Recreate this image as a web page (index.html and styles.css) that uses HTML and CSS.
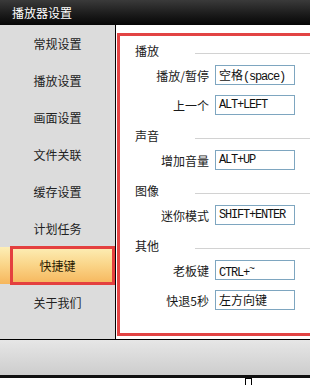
FILE: index.html
```html
<!DOCTYPE html>
<html>
<head>
<meta charset="utf-8">
<link rel="stylesheet" href="styles.css">
</head>
<body>
<div class="window">
  <div class="titlebar">播放器设置</div>
  <div class="main">
    <ul class="sidebar">
      <li class="nav-item">常规设置</li>
      <li class="nav-item">播放设置</li>
      <li class="nav-item">画面设置</li>
      <li class="nav-item">文件关联</li>
      <li class="nav-item">缓存设置</li>
      <li class="nav-item">计划任务</li>
      <li class="nav-item active">快捷键</li>
      <li class="nav-item">关于我们</li>
    </ul>
    <div class="content">
      <div class="panel">
        <div class="group">
          <div class="group-title"><span class="group-name">播放</span><span class="group-rule"></span></div>
          <div class="row"><span class="row-label">播放/暂停</span><div class="key-input"><span class="cjk">空格</span>(space)</div></div>
          <div class="row"><span class="row-label">上一个</span><div class="key-input">ALT+LEFT</div></div>
        </div>
        <div class="group">
          <div class="group-title"><span class="group-name">声音</span><span class="group-rule"></span></div>
          <div class="row"><span class="row-label">增加音量</span><div class="key-input">ALT+UP</div></div>
        </div>
        <div class="group">
          <div class="group-title"><span class="group-name">图像</span><span class="group-rule"></span></div>
          <div class="row"><span class="row-label">迷你模式</span><div class="key-input">SHIFT+ENTER</div></div>
        </div>
        <div class="group">
          <div class="group-title"><span class="group-name">其他</span><span class="group-rule"></span></div>
          <div class="row"><span class="row-label">老板键</span><div class="key-input">CTRL+<span class="tilde">~</span></div></div>
          <div class="row"><span class="row-label">快退5秒</span><div class="key-input"><span class="cjk">左方向键</span></div></div>
        </div>
      </div>
    </div>
  </div>
  <div class="footer"></div>
  <div class="below"><span class="cursor-mark"></span></div>
</div>
</body>
</html>
```
FILE: styles.css
```css
html, body {
  margin: 0;
  padding: 0;
  background: #fff;
  width: 310px;
  height: 385px;
  overflow: hidden;
}
body {
  font-family: "Noto Sans CJK SC", "Liberation Sans", sans-serif;
  font-size: 12px;
  color: #1a1a1a;
}
.window {
  width: 310px;
}
.titlebar {
  height: 25px;
  line-height: 25px;
  padding-left: 12px;
  color: #fff;
  font-size: 12px;
  background: linear-gradient(#3a3a3a, #1c1c1c 55%, #060606);
}
.main {
  display: flex;
  height: 314px;
}
.sidebar {
  width: 115px;
  margin: 0;
  padding: 0;
  list-style: none;
  background: #dcdcdc;
  border-right: 1px solid #000;
}
.nav-item {
  height: 37px;
  display: flex;
  align-items: center;
  justify-content: center;
  color: #222;
  position: relative;
}
.nav-item.active {
  background: linear-gradient(#fdeeb6, #fad487 50%, #f6b65c);
  color: #2a1a00;
}
.nav-item.active::after {
  content: "";
  position: absolute;
  left: 10px;
  right: 0;
  top: -1px;
  bottom: -1px;
  border: 3px solid #e4403f;
}
.content {
  flex: 1;
  min-width: 0;
  padding: 8px 0 3px 1px;
  background: #fff;
  overflow: hidden;
}
.panel {
  height: 100%;
  box-sizing: border-box;
  margin-right: -12px;
  border: 3px solid #e24444;
  padding: 4px 0 0 15px;
  display: flex;
  flex-direction: column;
  gap: 10px;
}
.group {
  display: flex;
  flex-direction: column;
  gap: 10px;
}
.group-title {
  display: flex;
  align-items: center;
  height: 20px;
  margin-bottom: -5px;
}
.group-name {
  width: 60px;
}
.group-rule {
  flex: 1;
  height: 1px;
  margin-top: 6px;
  background: #d2d2d2;
}
.row {
  display: flex;
  align-items: center;
  gap: 6px;
  height: 20px;
}
.row-label {
  width: 74px;
  text-align: right;
}
.key-input {
  width: 80px;
  height: 20px;
  box-sizing: border-box;
  border: 1px solid #7ea6c0;
  padding: 0 3px;
  line-height: 18px;
  font-family: "Liberation Mono", "Noto Sans CJK SC", monospace;
  font-size: 12px;
  letter-spacing: -1.2px;
  white-space: nowrap;
  overflow: hidden;
  color: #111;
}
.cjk {
  font-family: "Noto Sans CJK SC", sans-serif;
  letter-spacing: 0;
}
.tilde {
  vertical-align: 4px;
  font-size: 10px;
}
.footer {
  height: 35px;
  border-top: 1px solid #000;
  border-bottom: 3px solid #111;
  background: linear-gradient(#e6e6e6, #cdcdcd);
}
.below {
  height: 7px;
  padding-left: 245px;
}
.cursor-mark {
  display: block;
  width: 5px;
  height: 6px;
  border: 1px solid #000;
  border-bottom: none;
}
```
